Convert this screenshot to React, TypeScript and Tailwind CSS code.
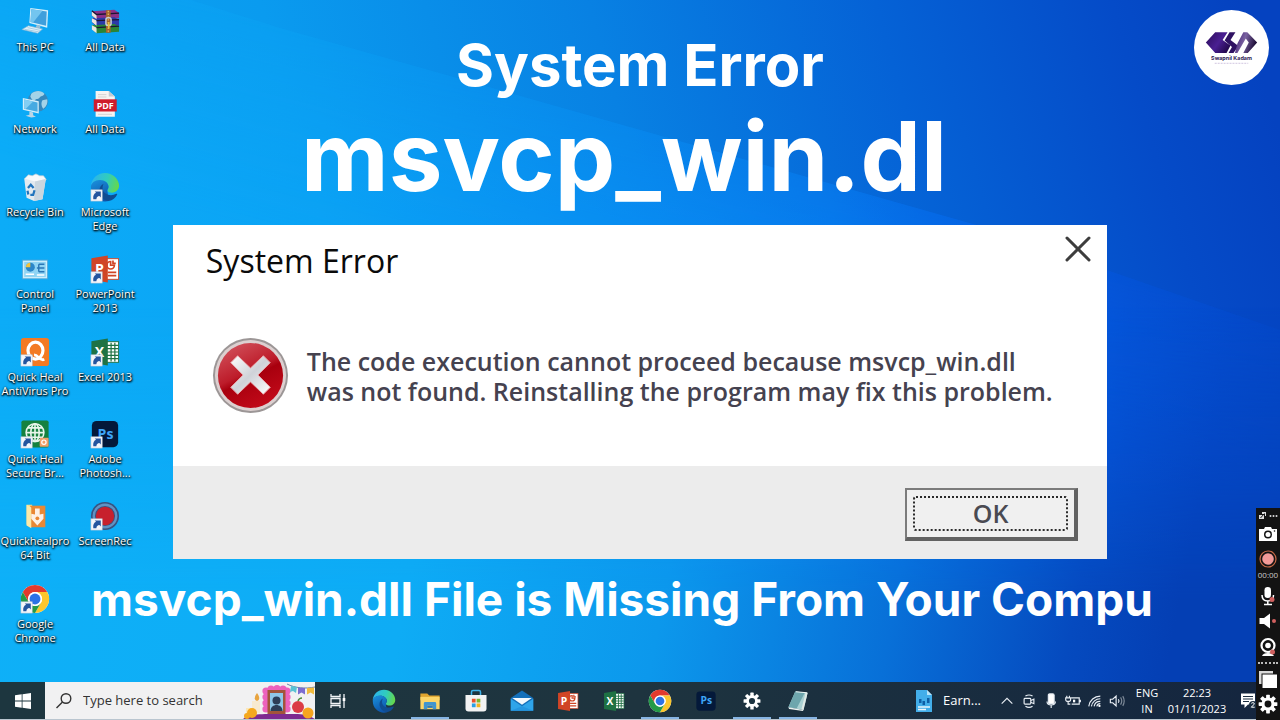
import type { ReactNode } from "react";

function Wallpaper() {
  return (
    <svg aria-hidden="true" className="absolute inset-0 h-full w-full" viewBox="0 0 1280 682" preserveAspectRatio="none">
      <defs>
        <linearGradient id="sky" x1="0" y1="0.35" x2="1" y2="0.2">
          <stop offset="0" stopColor="#0aa5f4" />
          <stop offset="0.25" stopColor="#0a9bef" />
          <stop offset="0.5" stopColor="#0881e3" />
          <stop offset="0.72" stopColor="#0562d6" />
          <stop offset="0.9" stopColor="#054bc8" />
          <stop offset="1" stopColor="#0542c0" />
        </linearGradient>
        <linearGradient id="beam" x1="0" y1="0.5" x2="1" y2="0.5">
          <stop offset="0" stopColor="#0cacf7" />
          <stop offset="0.25" stopColor="#0ba3f5" />
          <stop offset="0.45" stopColor="#0994f6" />
          <stop offset="0.65" stopColor="#0884fb" />
          <stop offset="0.78" stopColor="#0566f6" />
          <stop offset="0.88" stopColor="#0555e0" />
          <stop offset="1" stopColor="#044acd" />
        </linearGradient>
        <linearGradient id="floor" x1="0" y1="0" x2="1" y2="0.1">
          <stop offset="0" stopColor="#0eb1f8" />
          <stop offset="0.4" stopColor="#0eacf5" />
          <stop offset="0.6" stopColor="#0c98ec" />
          <stop offset="0.78" stopColor="#0870d8" />
          <stop offset="0.92" stopColor="#054abf" />
          <stop offset="1" stopColor="#043fb4" />
        </linearGradient>
        <linearGradient id="fade" x1="0" y1="0" x2="0" y2="1">
          <stop offset="0.45" stopColor="#fff" stopOpacity="0" />
          <stop offset="0.88" stopColor="#fff" />
        </linearGradient>
        <linearGradient id="beamFade" gradientUnits="userSpaceOnUse" x1="300" y1="0" x2="240" y2="230">
          <stop offset="0" stopColor="#fff" stopOpacity="0.3" />
          <stop offset="1" stopColor="#fff" />
        </linearGradient>
        <mask id="lower">
          <rect width="1280" height="682" fill="url(#fade)" />
        </mask>
        <mask id="beamMask">
          <rect width="1280" height="682" fill="url(#beamFade)" />
        </mask>
      </defs>
      <rect width="1280" height="682" fill="url(#sky)" />
      <path d="M0 -60 L280 28 L980 226 L1280 330 V682 H0Z" fill="url(#beam)" mask="url(#beamMask)" />
      <rect width="1280" height="682" fill="url(#floor)" mask="url(#lower)" />
    </svg>
  );
}

/* ---------- desktop and taskbar icons, all on a 32 unit square ---------- */

function Icon({ children, size = "h-8 w-8" }: { children: ReactNode; size?: string }) {
  return (
    <svg aria-hidden="true" viewBox="0 0 32 32" className={size + " shrink-0"}>
      {children}
    </svg>
  );
}

function Arrow() {
  return (
    <g>
      <rect x="1" y="19" width="12" height="12" fill="#f4f6fa" stroke="#b9c4d4" strokeWidth="0.6" />
      <path d="M3.500 29c-.5-3.500 .8-6 3-6.800L5 20.700h6.500v6.500L10 25.700c-2 .3-3 1.300-3.200 3.300z" fill="#24559f" />
    </g>
  );
}

function ThisPc() {
  return (
    <>
      <path d="M11 1 30 3.500 29 22 10 17z" fill="#d6f0fb" />
      <path d="M12 2.500 28.500 4.800 27.800 20 11.200 16z" fill="#3f9fdc" />
      <path d="M12 2.500 24 4 14 16.500 11.200 16z" fill="#73c5ef" />
      <path d="M18 19l4 1-1 4-5-1z" fill="#9bbfd6" />
      <path d="M2 24 9 20 24 23.500 19 28z" fill="#e1f1f9" stroke="#7fb3d3" strokeWidth="0.7" />
      <path d="M5 23.800 20 26.500M8 22 22 25" stroke="#7fb3d3" strokeWidth="0.6" />
    </>
  );
}

function NetworkPc() {
  return (
    <>
      <circle cx="19" cy="13" r="11" fill="#3588bd" />
      <path d="M12 5c4-4 11-4 14 0-1 3-4 2-5 4s-4 1-5 3-4-1-5-4zM24 12l5-1c1 4-1 8-4 10-2-2-3-6-1-9z" fill="#a3d3e8" />
      <path d="M3 9.500 20 13v13L3 22z" fill="#d4eefa" />
      <path d="M4.300 11.300 18.700 14.300v10L4.300 21z" fill="#47aae2" />
      <path d="M4.300 11.300 14 13.300 6 21.300 4.300 21z" fill="#83cef3" />
      <path d="M10 24l4 1v3l3 1.500-5 1-6-2 4-1z" fill="#bcd6e6" />
    </>
  );
}

function RecycleBin() {
  return (
    <>
      <path d="M5 7 9 3l4 1 4-2 4 2 4 0 3 4-4 3H8z" fill="#f7f9fb" stroke="#bfcbd4" strokeWidth="0.7" />
      <path d="M4.500 7 16 10l11.500-2.500L24 29l-9 2-8-3.500z" fill="#e3eaf0" />
      <path d="M16 10 27.500 7.500 24 29l-9 2z" fill="#cbd6df" />
      <g fill="none" stroke="#2274bd" strokeWidth="2.400">
        <path d="M8.500 17 11.500 13.500l3 3.500" />
        <path d="M15.500 19.500l-1.500 5h-3" />
        <path d="M8 20 8.800 24" />
      </g>
    </>
  );
}

function ControlPanel() {
  return (
    <>
      <rect x="2.500" y="6.500" width="27" height="20" fill="#cdeefb" stroke="#4aa5d8" />
      <rect x="4.500" y="8.500" width="23" height="16" fill="#8fd4f4" />
      <circle cx="11" cy="14" r="4.800" fill="#2b86c9" />
      <path d="M11 14V9.200A4.800 4.800 0 0 0 6.200 14z" fill="#f3c33c" />
      <path d="M6 21.500h9M18 22.500h8" stroke="#fff" strokeWidth="1.600" />
      <path d="M20 11h6M18 15h8M20 19h6M20 11v8" stroke="#2a77b6" strokeWidth="1.500" fill="none" />
    </>
  );
}

function QuickHeal() {
  return (
    <>
      <rect x="1" y="1" width="30" height="30" rx="3" fill="#f37a23" />
      <ellipse cx="16.500" cy="14.500" rx="8" ry="9" fill="none" stroke="#fff" strokeWidth="3.400" />
      <path d="M15 19c5 0 5 7 11 5" fill="none" stroke="#fff" strokeWidth="3" />
      <Arrow />
    </>
  );
}

function SecureBrowser() {
  return (
    <>
      <rect x="1.500" y="1.500" width="29" height="29" rx="2" fill="#16813f" />
      <g fill="none" stroke="#e9f6ec" strokeWidth="1.700">
        <circle cx="16" cy="14.500" r="9.500" />
        <ellipse cx="16" cy="14.500" rx="4.500" ry="9.500" />
        <path d="M6.500 14.500h19M8 9.500h16M8 19.500h16M16 5v19" />
      </g>
      <rect x="21" y="20" width="9.500" height="9.500" rx="1" fill="#f0a06a" />
      <circle cx="25.500" cy="24.700" r="2.300" fill="none" stroke="#fff" strokeWidth="1.300" />
      <Arrow />
    </>
  );
}

function InstallerFolder() {
  return (
    <>
      <path d="M7 4h6v23l-6-2z" fill="#f9dc86" />
      <path d="M11 5h16v23H11z" fill="#e98835" />
      <path d="M7 4l5 3v22l-5-3z" fill="#fbe9a8" />
      <path d="M16 8h5v6.500l4-1v5.500l-6.500 7-6.500-7v-5.500l4 1z" fill="#fdf1e6" />
      <circle cx="18.500" cy="18.500" r="2" fill="#e98835" />
    </>
  );
}

function Chrome() {
  return (
    <>
      <circle cx="16" cy="16" r="15" fill="#fff" />
      <path d="M3 8.500A15 15 0 0 1 29 8.500H16a7.500 7.500 0 0 0-6.500 11.200z" fill="#e23a2e" />
      <path d="M29 8.500A15 15 0 0 1 16 31l6.500-11.200A7.500 7.500 0 0 0 16 8.500z" fill="#fbc62c" />
      <path d="M16 31A15 15 0 0 1 3 8.500l6.500 11.300A7.500 7.500 0 0 0 22.500 19.800z" fill="#249a48" />
      <circle cx="16" cy="16" r="7.500" fill="#fff" />
      <circle cx="16" cy="16" r="5.800" fill="#2c72e6" />
    </>
  );
}

function Edge() {
  return (
    <>
      <defs>
        <linearGradient id="edgeTop" x1="0" y1="0.4" x2="1" y2="0.6">
          <stop offset="0" stopColor="#2bb4ee" />
          <stop offset="0.55" stopColor="#31cdbb" />
          <stop offset="1" stopColor="#68d846" />
        </linearGradient>
        <linearGradient id="edgeLow" x1="0" y1="0" x2="0.4" y2="1">
          <stop offset="0" stopColor="#1b93de" />
          <stop offset="1" stopColor="#0d56ac" />
        </linearGradient>
      </defs>
      <path d="M1 16C1 7 8 1 16 1s15 6.500 15 13.500c0 4.500-3.500 7.500-7.500 7.500-3 0-5-1.200-5-2.400 0-.8 1.300-1.500 1.300-3.800C19.800 12 15.500 9 11 9 5 9 1 13 1 16z" fill="url(#edgeTop)" />
      <path d="M1 16c0-4 4-7.500 9.500-7.500 5.500 0 9.300 3.500 9.300 7.300 0 2.300-1.300 3-1.300 3.800L20 31c-1.200.300-2.500.500-4 .500C8 31.500 1 25 1 16z" fill="url(#edgeLow)" />
      <path d="M14.500 12.500C11.500 14 10 17 10 20c0 5 3.500 10 10 11 4-.8 7.500-3.500 9-7 .2-.8-.5-1-1-.7C22 26.500 14.500 24 13.500 18.500c-.3-2.500.2-4.500 1-6z" fill="#104c91" />
    </>
  );
}

function OfficeApp({ letter, color, sheet }: { letter: string; color: string; sheet: boolean }) {
  return (
    <>
      <rect x="16" y="5" width="14.500" height="22" fill="#fff" stroke={color} strokeWidth="1" />
      {sheet ? (
        <path d="M17 9h13M17 12.500h13M17 16h13M17 19.500h13M17 23h13M22.500 6v20M26.500 6v20" stroke={color} strokeWidth="1.300" />
      ) : (
        <g fill="none" stroke={color} strokeWidth="1.800">
          <path d="M22 8a4 4 0 1 0 4 4h-4zM24.500 7v3h3M19 19.500h9M19 23h9" />
        </g>
      )}
      <path d="M1.500 4.500 19 1.500v29L1.500 27.500z" fill={color} />
      <text x="10" y="21.500" textAnchor="middle" fontSize="15" fontWeight="700" fill="#fff" fontFamily="Open Sans, sans-serif">
        {letter}
      </text>
    </>
  );
}

const PowerPoint = () => <OfficeApp letter="P" color="#d04526" sheet={false} />;
const Excel = () => <OfficeApp letter="X" color="#1f7244" sheet />;

function Photoshop() {
  return (
    <>
      <rect x="2" y="2" width="28" height="28" rx="5" fill="#04193a" />
      <text x="16.500" y="21" textAnchor="middle" fontSize="15" fontWeight="700" fill="#3ea5f7" fontFamily="Open Sans, sans-serif">
        Ps
      </text>
    </>
  );
}

function WinRar() {
  return (
    <>
      <path d="M2 4.500 26 3l5 3.500v5.500L7 14 2 9z" fill="#8c3186" />
      <path d="M2 12l24-1 5 2.500v6L7 21l-5-4.500z" fill="#2c3aa8" />
      <path d="M2 19.500 26 18l5 2.500v6L7 28l-5-4.500z" fill="#2b8436" />
      <path d="M2 4.500 7 8v5L2 9zM2 12l5 2.500V20l-5-4zM2 19.500l5 2.500v6l-5-4z" fill="#ece6dd" />
      <path d="M2 4l5 4 24-1.500M7 14.500l24-1M7 22l24-1.500" stroke="#1b1533" strokeWidth="1.400" fill="none" />
      <path d="M17 3.500h5v24h-5z" fill="#a3622d" />
      <path d="M19.500 4v23" stroke="#e4b95b" strokeWidth="1.400" strokeDasharray="1.500 1.500" />
      <rect x="17" y="11.500" width="5.500" height="8" rx="2" fill="none" stroke="#c9cdd4" strokeWidth="1.600" />
      <path d="M20 16v7" stroke="#e8c040" strokeWidth="1.800" />
    </>
  );
}

function PdfFile() {
  return (
    <>
      <path d="M6 2h14l6.500 6v21.500H6z" fill="#f5f3f2" />
      <path d="M20 2v6h6.500z" fill="#c4c9d0" />
      <path d="M8.500 6h9M8.500 8.500h9M8.500 27h15" stroke="#c8c8c8" strokeWidth="0.8" />
      <rect x="4" y="11" width="24.500" height="13" fill="#cf1c2c" />
      <text x="16.200" y="21" textAnchor="middle" fontSize="9.500" fontWeight="700" fill="#fff" fontFamily="Open Sans, sans-serif">
        PDF
      </text>
    </>
  );
}

function ScreenRec() {
  return (
    <>
      <circle cx="16" cy="16" r="15" fill="#38527f" />
      <circle cx="16" cy="16" r="12" fill="none" stroke="#5f93c4" strokeWidth="2.500" />
      <circle cx="16" cy="16" r="9.800" fill="#c7202d" />
      <Arrow />
    </>
  );
}

function Explorer() {
  return (
    <>
      <path d="M2 5h10l3 3h15v7H2z" fill="#e0a52f" />
      <path d="M2 10h28v18H2z" fill="#fbd568" />
      <path d="M7 28v-8.500q0-2 2-2h14q2 0 2 2V28h-5v-5h-8v5z" fill="#4095cf" />
      <path d="M12 23h8v3h-8z" fill="#2d7ab5" />
    </>
  );
}

function Store() {
  return (
    <>
      <path d="M10 9V4q0-2 2-2h8q2 0 2 2v5" fill="none" stroke="#3eb2ea" strokeWidth="2" />
      <path d="M2 8h28v18q0 4-4 4H6q-4 0-4-4z" fill="#f3f3f3" />
      <path d="M10.500 13h5v5h-5z" fill="#e9512b" />
      <path d="M16.800 13h5v5h-5z" fill="#7bb62d" />
      <path d="M10.500 19.300h5v5h-5z" fill="#2b9fe4" />
      <path d="M16.800 19.300h5v5h-5z" fill="#f2b420" />
    </>
  );
}

function Mail() {
  return (
    <>
      <path d="M1 12 16 2l15 10v17H1z" fill="#1470ba" />
      <path d="M1 13l15 10 15-10v16H1z" fill="#2fa5ea" />
      <path d="M3 12h26L16 21z" fill="#f4f9fd" />
      <path d="M16 23 31 29H1z" fill="#1c87d5" opacity="0.5" />
    </>
  );
}

function Gear({ size, inner }: { size: string; inner: string }) {
  return (
    <Icon size={size}>
      <g fill="#fff">
        <circle cx="16" cy="16" r="10.500" />
        {[0, 45, 90, 135].map((turn) => (
          <rect key={turn} x="13" y="1" width="6" height="30" rx="1" transform={`rotate(${turn} 16 16)`} />
        ))}
      </g>
      <circle cx="16" cy="16" r="5.500" fill={inner} />
    </Icon>
  );
}

function Notepad() {
  return (
    <>
      <path d="M12 2 30 4 24 29 2 25z" fill="#a9d0d2" />
      <path d="M12 2 26 3.500 14 27 2 25z" fill="#6ea6ad" />
      <path d="M30 4 24 29l-3-1L27 4z" fill="#dfe9e6" />
      <path d="M2 25 24 29l-1 1.500-20-3z" fill="#eef3f2" />
      <path d="M13 2.500 29 4" stroke="#eef6f4" strokeWidth="1.500" />
    </>
  );
}

/* ---------- desktop shortcuts ---------- */

type Shortcut = { lines: string[]; art: ReactNode };

const firstColumn: Shortcut[] = [
  { lines: ["This PC"], art: <ThisPc /> },
  { lines: ["Network"], art: <NetworkPc /> },
  { lines: ["Recycle Bin"], art: <RecycleBin /> },
  { lines: ["Control", "Panel"], art: <ControlPanel /> },
  { lines: ["Quick Heal", "AntiVirus Pro"], art: <QuickHeal /> },
  { lines: ["Quick Heal", "Secure Br..."], art: <SecureBrowser /> },
  { lines: ["Quickhealpro", "64 Bit"], art: <InstallerFolder /> },
  { lines: ["Google", "Chrome"], art: <><Chrome /><Arrow /></> },
];

const secondColumn: Shortcut[] = [
  { lines: ["All Data"], art: <WinRar /> },
  { lines: ["All Data"], art: <PdfFile /> },
  { lines: ["Microsoft", "Edge"], art: <><Edge /><Arrow /></> },
  { lines: ["PowerPoint", "2013"], art: <><PowerPoint /><Arrow /></> },
  { lines: ["Excel 2013"], art: <><Excel /><Arrow /></> },
  { lines: ["Adobe", "Photosh..."], art: <><Photoshop /><Arrow /></> },
  { lines: ["ScreenRec"], art: <ScreenRec /> },
];

function ShortcutColumn({ items }: { items: Shortcut[] }) {
  return (
    <ul className="grid w-[70px] grid-rows-8">
      {items.map((item, i) => (
        <li key={i} className="flex justify-center">
          <button type="button" className="flex w-full flex-col items-center">
            <Icon size="h-[30px] w-[30px]">{item.art}</Icon>
            <span className="mt-[3px] block text-[11px] leading-[14px] whitespace-nowrap text-white [text-shadow:0_1px_2px_#000,1px_1px_2px_#000,0_0_2px_#0008]">
              {item.lines.map((line) => (
                <span key={line} className="block">{line}</span>
              ))}
            </span>
          </button>
        </li>
      ))}
    </ul>
  );
}

/* ---------- dialog ---------- */

function ErrorDialog() {
  return (
    <section role="dialog" aria-labelledby="dialog-title" className="flex w-[73%] flex-col bg-white">
      <header className="flex items-start justify-between pt-2.5 pr-[14px] pl-[33px]">
        <h2 id="dialog-title" className="pt-1 text-[32px] leading-[44px] text-[#0a0a0a]">System Error</h2>
        <button type="button" aria-label="Close">
          <svg viewBox="0 0 30 30" className="h-[30px] w-[30px]" fill="none" stroke="#3d3d3d" strokeWidth="3" strokeLinecap="round">
            <path d="M4 3 26 25M26 3 4 25" />
          </svg>
        </button>
      </header>
      <div className="flex items-center gap-[18px] px-[39px] pt-[54px] pb-[52px]">
        <svg viewBox="0 0 78 78" className="h-[77px] w-[77px] shrink-0" aria-hidden="true">
          <defs>
            <linearGradient id="ball" x1="0.2" y1="0" x2="0.7" y2="1">
              <stop offset="0" stopColor="#d2525c" />
              <stop offset="0.45" stopColor="#bd1c2a" />
              <stop offset="0.55" stopColor="#a8000e" />
              <stop offset="1" stopColor="#c40a1a" />
            </linearGradient>
            <linearGradient id="cross" x1="0" y1="0" x2="1" y2="1">
              <stop offset="0" stopColor="#fff" />
              <stop offset="0.5" stopColor="#cfd2d8" />
              <stop offset="1" stopColor="#fff" />
            </linearGradient>
          </defs>
          <circle cx="39" cy="39" r="38" fill="#9c9696" />
          <circle cx="39" cy="39" r="36" fill="#dcd0d0" />
          <circle cx="39" cy="39" r="33" fill="url(#ball)" />
          <path d="M26 19 39 31.500 52 19l7 7-12.500 12.500L59 51l-7 7-13-12.500L26 58l-7-7 12.500-12.500L19 26z" fill="url(#cross)" stroke="#e9a9ad" strokeWidth="1" />
        </svg>
        <p className="text-[25px] leading-[30px] font-semibold whitespace-nowrap text-[#45424f]">
          The code execution cannot proceed because msvcp_win.dll
          <br />
          was not found. Reinstalling the program may fix this problem.
        </p>
      </div>
      <footer className="flex justify-end bg-[#ececec] pt-[22px] pr-[29px] pb-[18px]">
        <button
          type="button"
          className="border-2 border-r-4 border-b-4 border-[#7b7b7b] border-r-[#626262] border-b-[#626262] bg-[#f0f0f0] p-1.5 text-[25px] leading-[31px] font-semibold text-[#4a4a52]"
        >
          <span className="block w-[155px] rounded-[3px] border-2 border-dotted border-[#2b2b2b]">OK</span>
        </button>
      </footer>
    </section>
  );
}

/* ---------- taskbar ---------- */

function FestiveArt() {
  return (
    <svg aria-hidden="true" viewBox="0 0 72 36" className="h-9 w-[72px] shrink-0">
      <path d="M0 36c8-6 14-4 22-5h30c8 0 14 1 20 5z" fill="#7d2a90" />
      <g fill="#ec62bd">
        {[8, 14, 20, 26].map((y) => (
          <g key={y}>
            <circle cx="23" cy={y} r="3.600" />
            <circle cx="44" cy={y} r="3.600" />
          </g>
        ))}
        <circle cx="28" cy="6" r="3.600" />
        <circle cx="34" cy="5.500" r="3.600" />
        <circle cx="40" cy="6" r="3.600" />
      </g>
      <rect x="24.500" y="7" width="18" height="24" fill="#a2543a" />
      <rect x="27" y="10" width="13" height="18" fill="#8fc7e8" />
      <circle cx="33.500" cy="17.500" r="4" fill="#2c3e58" />
      <path d="M27.500 28c0-8 12-8 12 0z" fill="#2c3e58" />
      <path d="M9 18h8v12H9z" fill="#f7ead0" />
      <path d="M3 25h8v6H3z" fill="#fbe7b8" />
      <path d="M14 10c3 4 3 7 0 8-3-1-3-4 0-8z" fill="#e8a440" />
      <circle cx="9" cy="30" r="5" fill="#f5a81f" />
      <circle cx="4" cy="33" r="3" fill="#f5a81f" />
      <circle cx="55" cy="24" r="6" fill="#db3b45" />
      <path d="M55 18c1-3 3-3 4-3" stroke="#4b8a3b" strokeWidth="1.500" fill="none" />
      <circle cx="65" cy="30" r="5.500" fill="#f6a51f" />
      <path d="M44 1c8 4 18 5 28 3" stroke="#6b86a8" fill="none" />
      <path d="M48 3l6 1-1 6-3-2-3 1z" fill="#5bc3d4" />
      <path d="M55 4.500l7 .5v6.500l-3.500-2-3.500 2z" fill="#7c6cd0" />
      <path d="M64 5l7-.5v7l-3.500-2-3.500 2z" fill="#f1bb3d" />
    </svg>
  );
}

const pinned: { name: string; art: ReactNode; open?: boolean; size?: string }[] = [
  { name: "Microsoft Edge", art: <Edge /> },
  { name: "File Explorer", art: <Explorer />, open: true, size: "h-[22px] w-[22px]" },
  { name: "Microsoft Store", art: <Store /> },
  { name: "Mail", art: <Mail /> },
  { name: "PowerPoint", art: <PowerPoint />, size: "h-[22px] w-[22px]" },
  { name: "Excel", art: <Excel />, size: "h-[22px] w-[22px]" },
  { name: "Google Chrome", art: <Chrome />, open: true },
  { name: "Photoshop", art: <Photoshop />, size: "h-[22px] w-[22px]" },
  { name: "Settings", art: null, open: true },
  { name: "Notepad", art: <Notepad />, open: true, size: "h-[22px] w-[22px]" },
];

function TrayIcon({ label, children }: { label: string; children: ReactNode }) {
  return (
    <button type="button" aria-label={label} className="flex w-[22px] justify-center">
      <svg viewBox="0 0 18 18" className="h-4 w-4" fill="none" stroke="#e8eef4" strokeWidth="1.300">
        {children}
      </svg>
    </button>
  );
}

function Taskbar() {
  return (
    <footer className="relative flex h-[38px] items-stretch border-b border-[#b9c5cf] bg-linear-to-r from-[#1d363f] via-[#1e343f] to-[#14253f] text-white">
      <button type="button" aria-label="Start" className="flex w-[45px] items-center justify-center">
        <svg viewBox="0 0 16 16" className="h-4 w-4" fill="#fff">
          <path d="M0 2.200 6.700 1.300v6.200H0zM7.500 1.200 16 0v7.500H7.500zM0 8.400h6.700v6.300L0 13.800zM7.500 8.400H16V16l-8.500-1.200z" />
        </svg>
      </button>
      <label className="flex w-[270px] items-center bg-[#f1f1f2] pl-2.5">
        <svg aria-hidden="true" viewBox="0 0 18 18" className="h-[18px] w-[18px] shrink-0" fill="none" stroke="#333" strokeWidth="1.400">
          <circle cx="11" cy="6.500" r="4.800" />
          <path d="M7.500 10 1.500 16" />
        </svg>
        <input
          aria-label="Search"
          placeholder="Type here to search"
          className="ml-2.5 min-w-0 flex-1 bg-transparent text-[13px] outline-none placeholder:text-[#333]"
        />
        <FestiveArt />
      </label>
      <button type="button" aria-label="Task view" className="flex w-[46px] items-center justify-center">
        <svg viewBox="0 0 18 18" className="h-[18px] w-[18px]" fill="none" stroke="#f2f5f7" strokeWidth="1.300">
          <path d="M2 2v2.500h9V2M2 16v-2.500h9V16M2 6.500h9v5H2zM15 2v14" />
          <path d="M13.700 6h2.600v3h-2.600z" fill="#fff" stroke="none" />
        </svg>
      </button>
      <nav aria-label="Pinned" className="flex">
        {pinned.map((app) => (
          <button
            key={app.name}
            type="button"
            aria-label={app.name}
            className={"mx-1 flex w-[38px] items-center justify-center border-b-2 pt-0.5 " + (app.open ? "border-[#86b4e3]" : "border-transparent")}
          >
            {app.art ? <Icon size={app.size ?? "h-6 w-6"}>{app.art}</Icon> : <Gear size="h-[18px] w-[18px]" inner="#1c3340" />}
          </button>
        ))}
      </nav>
      <div className="ml-auto flex items-center pr-[23px]">
        <button type="button" className="mr-[15px] flex items-center gap-2.5 text-[13px]">
          <svg aria-hidden="true" viewBox="0 0 18 22" className="h-[22px] w-[18px]">
            <path d="M1 0h11l5 5v17H1z" fill="#43aeea" />
            <path d="M12 0v5h5z" fill="#b9e4f9" />
            <path d="M4 13V9h2.500v4zM7.500 15V11H10v4zM12 13V8h2.500v5z" fill="#0f5fa5" />
            <path d="M3 17h12M3 19.500h8" stroke="#e9f6fd" strokeWidth="1.300" />
          </svg>
          Earn...
        </button>
        <TrayIcon label="Show hidden icons"><path d="M3 12 9 6l6 6" /></TrayIcon>
        <TrayIcon label="Meet now">
          <rect x="3.500" y="6" width="7.500" height="6.500" rx="1" />
          <path d="M11 8.500 14.500 7v5L11 10.500M5 3.500q4-2.500 8 0M5 15q4 2.500 8 0" />
        </TrayIcon>
        <TrayIcon label="Microphone">
          <rect x="6" y="1" width="6.500" height="11" rx="1.500" fill="#fff" />
          <path d="M4.500 9.500q0 4 4.700 4t4.800-4M9.200 13.500V17" />
        </TrayIcon>
        <TrayIcon label="Battery">
          <path d="M7 5.500h9v7H7.500M17.300 7.500v3M2 3v2.500M5 3v2.500M.8 5.500h5.500v2q0 2-2.700 2t-2.800-2zM3.500 9.500v3H6" />
          <path d="M9 7.500h2.500v3H9z" fill="#fff" stroke="none" />
        </TrayIcon>
        <TrayIcon label="Wi-Fi">
          <path d="M2 15A13 13 0 0 1 15 3.500M5 15A10 10 0 0 1 15 6.500M8 15a7 7 0 0 1 7-5.500M11 15a4 4 0 0 1 4-3" />
          <circle cx="14" cy="14.500" r="1.300" fill="#fff" stroke="none" />
        </TrayIcon>
        <TrayIcon label="Volume">
          <path d="M1.500 7h2.700L8 3.500v11L4.200 11H1.500zM10.500 7q1.500 2 0 4" />
          <path d="M13 5q2.700 4 0 8M15.500 3.500q3.200 5.500 0 11" opacity="0.5" />
        </TrayIcon>
        <div className="ml-[3px] w-8 text-center text-[11px] leading-4">
          <div>ENG</div>
          <div>IN</div>
        </div>
        <time className="ml-1 w-[60px] text-center text-[11px] leading-4 whitespace-nowrap" dateTime="2023-11-01T22:23">
          <span className="block">22:23</span>
          <span className="block">01/11/2023</span>
        </time>
        <button type="button" aria-label="Notifications" className="ml-3">
          <svg viewBox="0 0 18 18" className="h-[18px] w-[18px]">
            <path d="M2 1.500h14v11H9L5.500 16v-3.500H2z" fill="#fff" />
            <path d="M4 4.500h10M4 7h10M4 9.500h6" stroke="#1a2d40" />
            <circle cx="14" cy="13" r="4" fill="#1a2d40" />
            <path d="M12.300 11.300q1.700-1.500 3 0 .3 1-3 3.900h3.400" fill="none" stroke="#fff" />
          </svg>
        </button>
      </div>
    </footer>
  );
}

/* ---------- recorder strip ---------- */

function Tool({ label, children }: { label: string; children: ReactNode }) {
  return (
    <button type="button" aria-label={label} className="flex">
      <svg viewBox="0 0 20 20" className="h-5 w-5" fill="#fff">
        {children}
      </svg>
    </button>
  );
}

function RecorderStrip() {
  return (
    <aside className="absolute right-0 bottom-0 flex h-[212px] w-6 flex-col items-center bg-[#131313] pt-1 pb-1.5">
      <svg aria-hidden="true" viewBox="0 0 20 8" className="h-2 w-5 shrink-0" fill="#ddd">
        <path d="M1 3h5v4H1zM4 0h4v4H7V2H4z" />
        <path d="M2.500 6 6.500 1.500" stroke="#131313" />
        <circle cx="12.500" cy="4" r="1" />
        <circle cx="15.500" cy="4" r="1" />
        <circle cx="18.500" cy="4" r="1" />
      </svg>
      <div className="flex flex-1 flex-col items-center justify-between pt-1">
        <Tool label="Screenshot">
          <path d="M1 5h5l1-2h6l1 2h5v12H1z" />
          <circle cx="10" cy="10.500" r="4" fill="#131313" />
          <circle cx="10" cy="10.500" r="2.500" />
          <circle cx="16.500" cy="7" r="0.800" fill="#131313" />
        </Tool>
        <div className="flex flex-col items-center">
          <Tool label="Record">
            <circle cx="10" cy="10" r="8" fill="none" stroke="#c96a48" strokeWidth="1.200" />
            <circle cx="10" cy="10" r="5.800" fill="#f29a98" />
          </Tool>
          <span className="text-[8px] leading-3 text-[#c9c9c9]">00:00</span>
        </div>
        <Tool label="Microphone">
          <rect x="6.500" y="1" width="6.500" height="11" rx="3.200" />
          <path d="M4 9q0 6 5.800 6t5.700-6M9.800 15v3.500M6 18.500h8" fill="none" stroke="#fff" strokeWidth="1.500" />
          <circle cx="14" cy="13.500" r="2.500" fill="#d0605f" />
        </Tool>
        <Tool label="Speaker">
          <path d="M1.500 7h4.500l6-4.500v15L6 13H1.500z" />
          <circle cx="16" cy="10" r="2" fill="#d0605f" />
        </Tool>
        <Tool label="Webcam">
          <circle cx="10" cy="8.500" r="6.500" fill="none" stroke="#fff" strokeWidth="2.200" />
          <circle cx="10" cy="8.500" r="2.800" />
          <path d="M4 19q1-3 6-3t6 3z" />
          <circle cx="14.500" cy="15" r="2.500" fill="#d0605f" />
        </Tool>
        <div className="w-full border-t-2 border-dotted border-[#bbb]" />
        <Tool label="Windows">
          <path d="M1 2h14v2.500H3.500V15H1z" fill="#d9d9d9" />
          <path d="M4.500 5.500H19V19H4.500z" />
        </Tool>
        <button type="button" aria-label="Recorder settings" className="flex">
          <Gear size="h-5 w-5" inner="#131313" />
        </button>
      </div>
    </aside>
  );
}

export default function App() {
  return (
    <div className="relative flex min-h-screen flex-col overflow-hidden bg-[#0a8ff0] font-['Open_Sans','Noto_Sans',sans-serif]">
      <main className="relative flex flex-1">
        <Wallpaper />
        <div className="relative flex pt-[7px] pb-4">
          <ShortcutColumn items={firstColumn} />
          <ShortcutColumn items={secondColumn} />
        </div>

        <div className="absolute inset-0 flex flex-col items-center">
          <h1 className="flex flex-col items-center pt-7 pb-4 font-['Inter',sans-serif] font-bold whitespace-nowrap text-white">
            <span className="block text-[58px] leading-[75px]">System Error</span>
            <span className="mr-8 block text-[96px] leading-[106px]">msvcp_win.dl</span>
          </h1>
          <ErrorDialog />
          <p className="mt-2 mr-9 font-['Inter',sans-serif] text-[46px] leading-[64px] font-bold whitespace-nowrap text-white">
            msvcp_win.dll File is Missing From Your Compu
          </p>
        </div>

        <svg role="img" aria-label="Swapnil Kadam" viewBox="0 0 76 76" className="absolute top-2.5 right-[11px] h-[75px] w-[75px]">
          <defs>
            <linearGradient id="inkLeft" x1="0" y1="0" x2="1" y2="0.6">
              <stop offset="0" stopColor="#2a0c58" />
              <stop offset="0.6" stopColor="#4a1f92" />
              <stop offset="1" stopColor="#260a52" />
            </linearGradient>
            <linearGradient id="inkRight" x1="0" y1="0" x2="1" y2="0.3">
              <stop offset="0" stopColor="#3b1a70" />
              <stop offset="0.5" stopColor="#7a62a0" />
              <stop offset="1" stopColor="#1f0f38" />
            </linearGradient>
          </defs>
          <circle cx="38" cy="38" r="38" fill="#fff" />
          <path d="M12 33 21.500 22.500H34L29 30.500 37 36 33 43.500H21.500z" fill="url(#inkLeft)" />
          <path d="M36 22.500H42L37 30.500 45 36.500 40 43.500H35L38.500 37.500 31 31z" fill="#2f1262" />
          <path d="M44 34 50 22.500H54L64 33 54.500 43.500H50L55.500 33 52.500 29 44 43.500H41.500z" fill="url(#inkRight)" />
          <text x="38" y="51" textAnchor="middle" fontSize="5.500" fontWeight="700" fill="#2a1650" fontFamily="Inter, sans-serif">Swapnil Kadam</text>
          <path d="M21 54h34" stroke="#cfc4e0" strokeDasharray="2 1" />
        </svg>
      </main>
      <Taskbar />
      <RecorderStrip />
    </div>
  );
}
